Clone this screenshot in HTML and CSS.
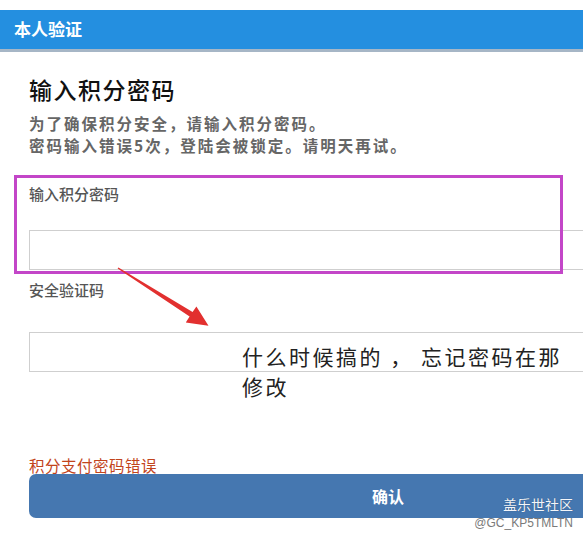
FILE: index.html
```html
<!DOCTYPE html>
<html lang="zh-CN">
<head>
  <meta charset="UTF-8">
  <meta name="viewport" content="width=device-width, initial-scale=1.0">
  <title>本人验证</title>
  <link rel="stylesheet" href="styles.css">
</head>
<body>
  <div class="page">
    <div class="header">
      <h1>本人验证</h1>
    </div>

    <div class="content">
      <h2 class="title">输入积分密码</h2>
      <p class="desc">为了确保积分安全，请输入积分密码。<br>密码输入错误5次，登陆会被锁定。请明天再试。</p>

      <div class="field">
        <label class="field-label">输入积分密码</label>
        <input class="field-input first" type="password">
      </div>

      <div class="field">
        <label class="field-label">安全验证码</label>
        <input class="field-input second" type="text">
      </div>

      <p class="error">积分支付密码错误</p>
      <button class="confirm-btn">确认</button>
    </div>

    <!-- annotation drawn over the screenshot -->
    <div class="highlight-box"></div>
    <svg class="arrow" width="583" height="546" viewBox="0 0 583 546">
      <polygon points="117.6,268.5 189.6,316.6 185.8,322.4 208.5,325.8 196.4,306.4 192.6,312.0 118.4,267.5" fill="#e2302f"/>
    </svg>
    <p class="note">什么时候搞的 ， 忘记密码在那<br>修改</p>

    <div class="watermark">
      <span class="wm-name">盖乐世社区</span>
      <span class="wm-user">@GC_KP5TMLTN</span>
    </div>
  </div>
</body>
</html>
```

FILE: styles.css
```css
* {
  margin: 0;
  padding: 0;
  box-sizing: border-box;
}

body {
  font-family: "Noto Sans CJK SC", "Liberation Sans", sans-serif;
  background: white;
  color: #555;
  overflow: hidden;
}

.page {
  position: relative;
  width: 583px;
  height: 546px;
  overflow: hidden;
}

.header {
  margin-top: 10px;
  height: 42px;
  background: #248fe0;
  border-bottom: 3px solid #a6b6c6;
  display: flex;
  align-items: center;
  padding-left: 14px;
}

.header h1 {
  font-size: 17px;
  font-weight: 700;
  color: white;
  line-height: 20px;
  margin-top: -2px;
}

.content {
  padding-left: 29px;
}

.title {
  margin-top: 22px;
  font-size: 23px;
  line-height: 30px;
  font-weight: 500;
  color: #111;
  letter-spacing: 1.5px;
}

.desc {
  margin-top: 8px;
  font-size: 15.5px;
  line-height: 22px;
  font-weight: 700;
  color: #666;
  letter-spacing: 2px;
}

.field-label {
  display: block;
  font-size: 15px;
  line-height: 20px;
  font-weight: 500;
  color: #555;
}

.field:first-of-type {
  margin-top: 28px;
}

.field + .field {
  margin-top: 10px;
}

.field-input {
  display: block;
  width: 620px;
  height: 40px;
  border: 1px solid #cfcfcf;
  background: white;
  outline: none;
}

.field-input.first {
  margin-top: 26px;
}

.field-input.second {
  margin-top: 32px;
}

.error {
  margin-top: 84px;
  font-size: 15.5px;
  line-height: 18px;
  color: #c2441c;
  letter-spacing: 0.5px;
}

.confirm-btn {
  display: block;
  width: 718px;
  height: 44px;
  border: none;
  border-radius: 7px;
  background: #4577b0;
  color: white;
  font-family: inherit;
  font-size: 16px;
  font-weight: 700;
}

.highlight-box {
  position: absolute;
  left: 14px;
  top: 175px;
  width: 549px;
  height: 99px;
  border: 3px solid #c346c8;
}

.arrow {
  position: absolute;
  left: 0;
  top: 0;
  pointer-events: none;
}

.note {
  position: absolute;
  left: 242px;
  top: 341px;
  font-size: 21px;
  line-height: 30px;
  color: #222;
  letter-spacing: 2.5px;
}

.watermark {
  position: absolute;
  right: 10px;
  top: 494px;
  display: flex;
  flex-direction: column;
  align-items: flex-end;
}

.wm-name {
  font-size: 14px;
  line-height: 20px;
  color: #f4f6fa;
  text-shadow: 0 0 1px #2a4a70;
}

.wm-user {
  font-size: 12px;
  line-height: 18px;
  color: #7a7a7a;
  font-family: "Liberation Sans", sans-serif;
}
```
